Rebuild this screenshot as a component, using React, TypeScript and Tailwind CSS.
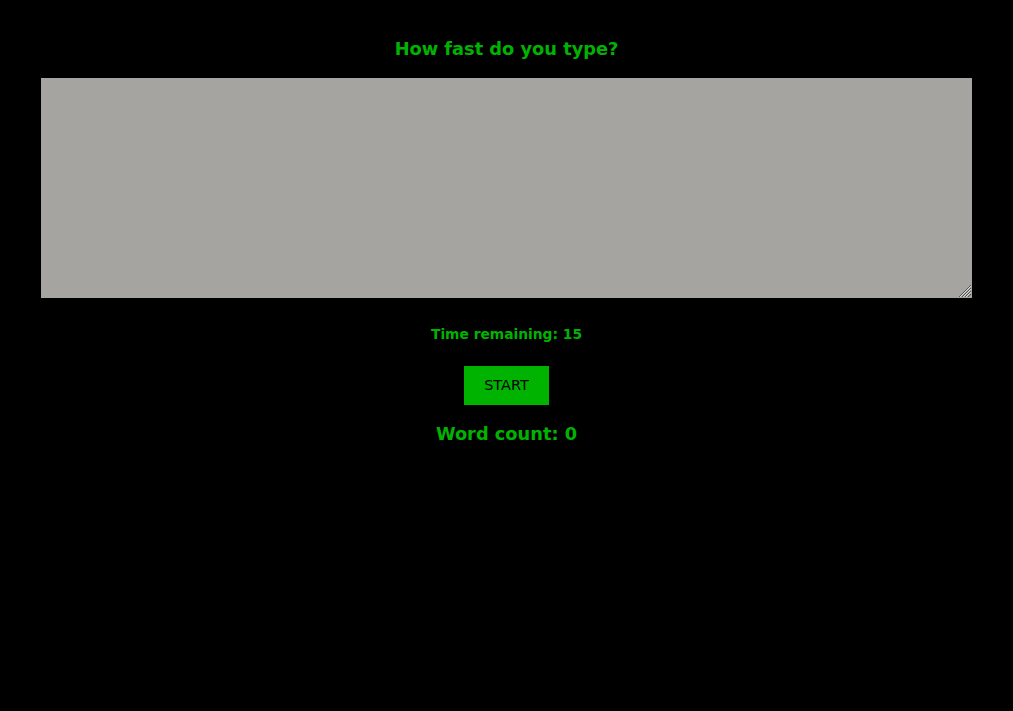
import React from "react";

export default function App() {
  return (
    <div
      className="min-h-[711px] w-full bg-black text-[#00b300] flex flex-col items-center"
      style={{ fontFamily: '"Comic Sans MS", "DejaVu Sans", sans-serif' }}
    >
      <h3 className="mt-[37px] h-[23px] text-[17.8px] leading-[24px] font-bold">How fast do you type?</h3>
      <div className="relative mt-[18px] w-[931px] h-[220px]">
        <textarea className="w-full h-full bg-[#a5a4a1] border-0 outline-none block resize-none" />
        <svg className="absolute right-0 bottom-0 pointer-events-none" width="16" height="16" viewBox="0 0 16 16">
          <g stroke="#555" strokeWidth="1">
            <line x1="3" y1="15" x2="15" y2="3" />
            <line x1="6" y1="15" x2="15" y2="6" />
            <line x1="9" y1="15" x2="15" y2="9" />
            <line x1="12" y1="15" x2="15" y2="12" />
          </g>
          <g stroke="#d8d8d8" strokeWidth="1">
            <line x1="4" y1="15" x2="15" y2="4" />
            <line x1="7" y1="15" x2="15" y2="7" />
            <line x1="10" y1="15" x2="15" y2="10" />
          </g>
        </svg>
      </div>
      <h4 className="mt-[26px] h-[20px] text-[13.8px] leading-[20px] font-bold">Time remaining: 15</h4>
      <button className="mt-[22px] w-[85px] h-[39px] bg-[#00b300] text-black text-[14.5px] leading-[39px]">START</button>
      <h3 className="mt-[17px] h-[24px] text-[17.8px] leading-[24px] font-bold">Word count: 0</h3>
    </div>
  );
}
